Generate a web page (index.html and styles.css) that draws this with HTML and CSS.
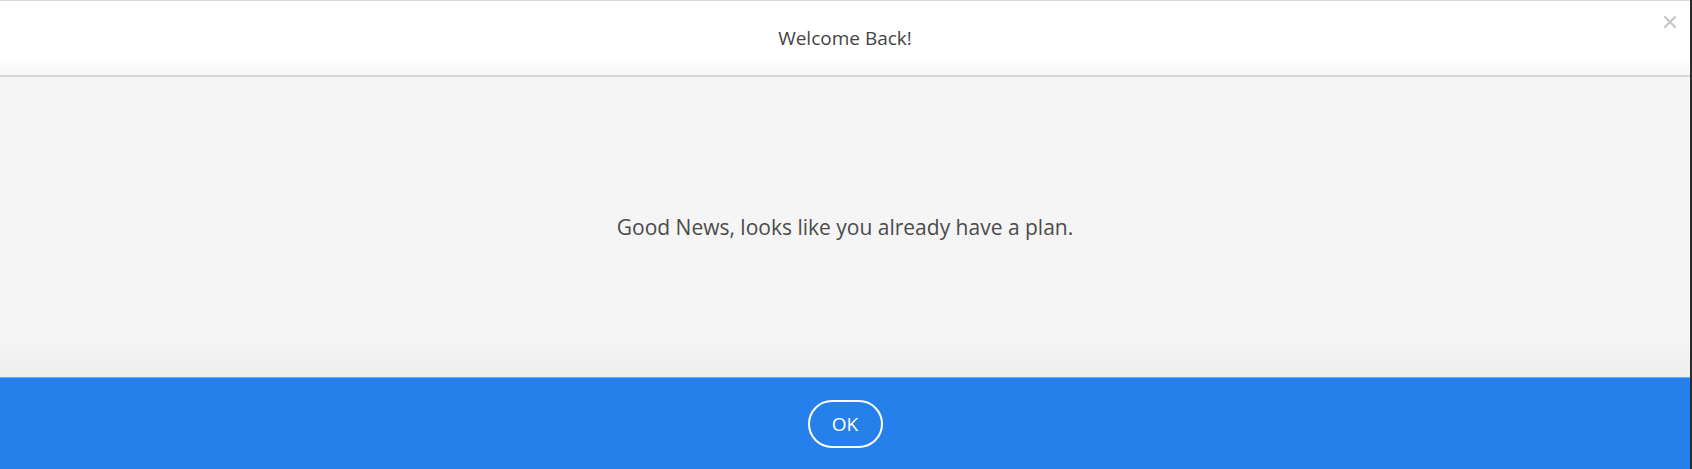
FILE: index.html
```html
<!DOCTYPE html>
<html lang="en">
<head>
  <meta charset="UTF-8">
  <meta name="viewport" content="width=device-width, initial-scale=1.0">
  <title>Welcome Back</title>
  <link rel="stylesheet" href="styles.css">
</head>
<body>

<div class="dialog">
  <!-- Titre -->
  <header class="dialog-header">
    <h1>Welcome Back!</h1>
    <button class="close-btn" aria-label="Close">
      <svg width="14" height="14" viewBox="0 0 14 14">
        <path d="M2 2 L12 12 M12 2 L2 12" stroke="#c6c6c6" stroke-width="2.2" stroke-linecap="round" fill="none"/>
      </svg>
    </button>
  </header>

  <!-- Message -->
  <div class="dialog-body">
    <p>Good News, looks like you already have a plan.</p>
  </div>

  <!-- Actions -->
  <div class="dialog-footer">
    <button class="ok-btn">OK</button>
  </div>
</div>

</body>
</html>
```

FILE: styles.css
```css
html, body {
  margin: 0;
  padding: 0;
  height: 100%;
}
body {
  font-family: "Open Sans", Arial, sans-serif;
  background-color: #2b2b2b;
}
.dialog {
  width: 1690px;
  height: 469px;
  display: flex;
  flex-direction: column;
  background-color: #f5f5f5;
}
.dialog-header {
  position: relative;
  height: 74px;
  border-top: 1px solid #d8d8d8;
  border-bottom: 2px solid #d8d8d8;
  background: linear-gradient(to bottom, #ffffff 0%, #ffffff 78%, #f7f7f7 100%);
  display: flex;
  align-items: center;
  justify-content: center;
}
.dialog-header h1 {
  margin: 0;
  font-size: 19px;
  font-weight: 400;
  color: #444444;
}
.close-btn {
  position: absolute;
  top: 14px;
  right: 13px;
  border: none;
  background: none;
  padding: 0;
  width: 14px;
  height: 14px;
  cursor: pointer;
}
.close-btn svg {
  display: block;
}
.dialog-body {
  flex: 1;
  display: flex;
  align-items: center;
  justify-content: center;
  background: linear-gradient(to bottom, #f5f5f5 0%, #f5f5f5 88%, #ededed 100%);
}
.dialog-body p {
  margin: 0;
  font-size: 21px;
  color: #4b4b4b;
}
.dialog-footer {
  height: 91px;
  background-color: #2680eb;
  border-top: 1px solid #6aa8f0;
  display: flex;
  align-items: center;
  justify-content: center;
}
.ok-btn {
  width: 75px;
  height: 48px;
  border: 2.5px solid #ffffff;
  border-radius: 24px;
  background: transparent;
  color: #ffffff;
  font-family: "Open Sans", Arial, sans-serif;
  font-size: 19px;
  font-weight: 500;
  cursor: pointer;
}
```
